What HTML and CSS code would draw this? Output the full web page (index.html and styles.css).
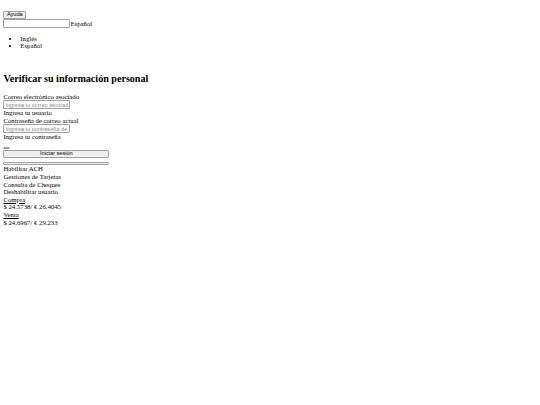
FILE: index.html
```html
<!DOCTYPE html>
<html lang="es">
<head>
<meta charset="utf-8">
<title>Verificar su información personal</title>
<link rel="stylesheet" href="styles.css">
</head>
<body>
<header class="top">
  <div class="line-spacer"></div>
  <button class="btn help" type="button">Ayuda</button>
  <div class="lang">
    <input class="input lang-input" type="text"><span>Español</span>
    <ul class="lang-list">
      <li>Inglés</li>
      <li>Español</li>
    </ul>
  </div>
</header>
<main class="content">
  <div class="line-spacer"></div>
  <h2 class="title">Verificar su información personal</h2>
  <form class="form">
    <div class="field-label">Correo electrónico asociado</div>
    <input class="input field" type="text" placeholder="Ingresa tu correo asociado">
    <div class="hint">Ingresa tu usuario</div>
    <div class="field-label">Contraseña de correo actual</div>
    <input class="input field" type="text" placeholder="Ingresa tu contraseña de correo">
    <div class="hint">Ingresa tu contraseña</div>
    <button class="btn tiny" type="button"></button>
    <button class="btn submit" type="button">Iniciar sesión</button>
    <button class="btn submit empty" type="button"></button>
  </form>
  <nav class="links">
    <div>Habilitar ACH</div>
    <div>Gestiones de Tarjetas</div>
    <div>Consulta de Cheques</div>
    <div>Deshabilitar usuario</div>
    <div class="rate-label">Compra</div>
    <div>$ 24.5738/ € 26.4045</div>
    <div class="rate-label">Venta</div>
    <div>$ 24.6967/ € 29.233</div>
  </nav>
</main>
</body>
</html>
```

FILE: styles.css
```css
body {
  margin: 3.4px;
  font-family: "Liberation Serif", "Times New Roman", serif;
  font-size: 6.75px;
  line-height: 7.6px;
  color: #000;
  background: #fff;
}
.line-spacer {
  height: 7.6px;
}
.btn {
  display: block;
  box-sizing: border-box;
  margin: 0;
  font-family: "Liberation Sans", Arial, sans-serif;
  font-size: 5.6px;
  line-height: 5.4px;
  color: #000;
  background: #efefef;
  border: 1px solid #a0a0a0;
  border-radius: 1px;
  padding: 0.5px 2.5px;
}
.help {
  height: 8px;
}
.lang {
  display: block;
}
.input {
  box-sizing: border-box;
  width: 67px;
  height: 9px;
  margin: 0;
  padding: 0 1px;
  font-family: "Liberation Sans", Arial, sans-serif;
  font-size: 5.6px;
  border: 1px solid #a0a0a0;
  border-radius: 1px;
  vertical-align: bottom;
}
.input::placeholder {
  color: #8a8a8a;
}
.lang-list {
  margin: 6.75px 0;
  padding-left: 16.9px;
}
.title {
  font-size: 10.1px;
  line-height: 11.6px;
  margin: 8.4px 0;
}
.form {
  margin: 0;
}
.field {
  display: block;
}
.tiny {
  width: 6.75px;
  height: 2.6px;
  padding: 0;
  margin-top: 5.6px;
}
.submit {
  width: 106px;
  height: 8.6px;
  margin-top: 0.4px;
  text-align: center;
}
.empty {
  height: 2.6px;
  padding: 0;
  margin-top: 4px;
  margin-bottom: 0.6px;
}
.rate-label {
  text-decoration: underline;
}
```
